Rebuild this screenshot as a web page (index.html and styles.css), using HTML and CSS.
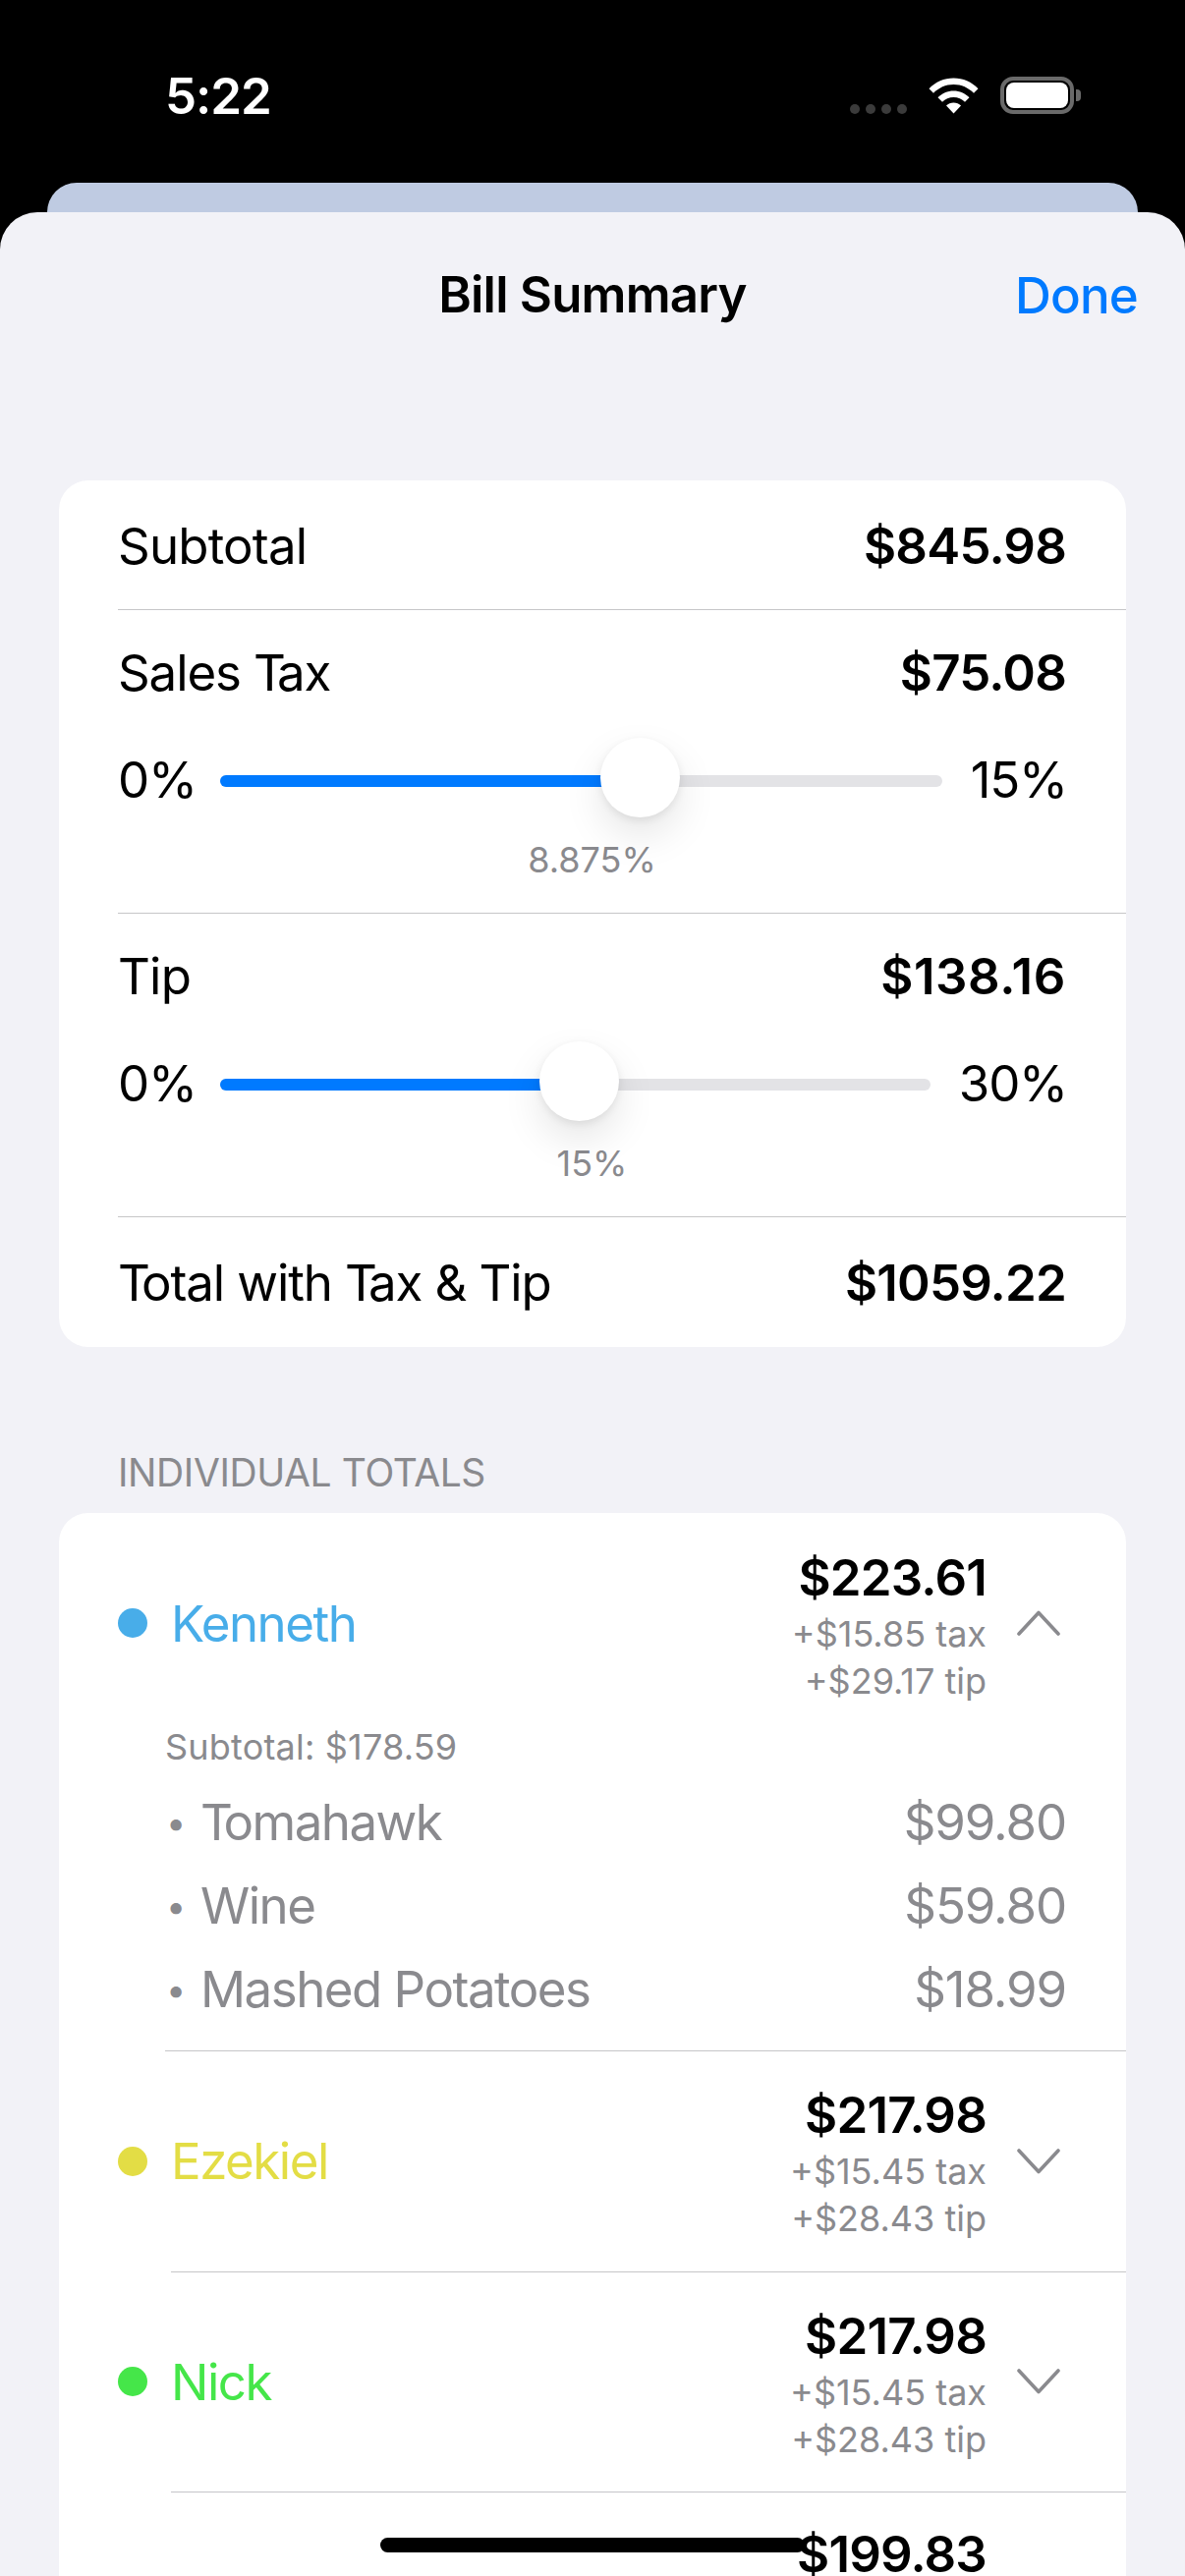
FILE: index.html
```html
<!DOCTYPE html>
<html lang="en">
<head>
<meta charset="utf-8">
<title>Bill Summary</title>
<link rel="stylesheet" href="styles.css">
</head>
<body>
<div class="screen">
  <header class="status">
    <span class="time">5:22</span>
    <div class="status-icons">
      <div class="signal"><i></i><i></i><i></i><i></i></div>
      <svg class="wifi" width="51" height="37" viewBox="0 0 51 37"><path fill="#fff" d="M0.5 11.2C7 4.5 15.8 0.5 25.5 0.5S44 4.5 50.5 11.2L46 15.8C40.7 10.4 33.5 7 25.5 7S10.3 10.4 5 15.8Z"/><path fill="#fff" d="M9.5 20.2C13.7 16 19.3 13.5 25.5 13.5S37.3 16 41.5 20.2L37 24.8C33.9 21.8 30 20 25.5 20S17.1 21.8 14 24.8Z"/><path fill="#fff" d="M18 28.5C20 26.6 22.6 25.5 25.5 25.5S31 26.6 33 28.5L25.5 36.5Z"/></svg>
      <div class="battery"><div class="battery-body"><div class="battery-level"></div></div><div class="battery-nub"></div></div>
    </div>
  </header>
  <div class="behind"></div>
  <main class="sheet">
    <div class="nav">
      <h1 class="nav-title">Bill Summary</h1>
      <span class="nav-done">Done</span>
    </div>
    <section class="card summary">
      <div class="row simple first"><span>Subtotal</span><b>$845.98</b></div>
      <div class="row adjust">
        <div class="line"><span class="tight">Sales <span class="tk">T</span>ax</span><b>$75.08</b></div>
        <div class="slider">
          <span class="slider-min">0%</span>
          <div class="track"><div class="fill" style="width:427px"></div><div class="thumb" style="left:387px"></div></div>
          <span class="slider-max">15%</span>
        </div>
        <div class="caption">8.875%</div>
      </div>
      <div class="row adjust">
        <div class="line"><span>Tip</span><b class="amount-wide">$138.16</b></div>
        <div class="slider">
          <span class="slider-min">0%</span>
          <div class="track"><div class="fill" style="width:364px"></div><div class="thumb" style="left:325px"></div></div>
          <span class="slider-max">30%</span>
        </div>
        <div class="caption">15%</div>
      </div>
      <div class="row simple last"><span class="tight"><span class="tk">T</span>otal with <span class="tk">T</span>ax &amp; Tip</span><b>$1059.22</b></div>
    </section>
    <h2 class="section-label">INDIVIDUAL TOTALS</h2>
    <section class="card people">
      <article class="person">
        <div class="person-head">
          <i class="dot dot-blue"></i>
          <span class="name name-blue">Kenneth</span>
          <div class="amounts"><b>$223.61</b><small>+$15.85 tax</small><small>+$29.17 tip</small></div>
          <svg class="chev" width="44" height="26" viewBox="0 0 44 26"><path d="M2 24L22 2.5L42 24" fill="none" stroke="#8a8a8e" stroke-width="3.6" stroke-linecap="round" stroke-linejoin="round"/></svg>
        </div>
        <div class="details">
          <div class="details-sub">Subtotal: $178.59</div>
          <div class="item"><span class="bullet">•</span><span class="item-name"><span class="tk">T</span>omahawk</span><span class="item-price">$99.80</span></div>
          <div class="item"><span class="bullet">•</span><span class="item-name">Wine</span><span class="item-price">$59.80</span></div>
          <div class="item"><span class="bullet">•</span><span class="item-name">Mashed Potatoes</span><span class="item-price">$18.99</span></div>
        </div>
      </article>
      <article class="person divided divided-wide">
        <div class="person-head">
          <i class="dot dot-yellow"></i>
          <span class="name name-yellow">Ezekiel</span>
          <div class="amounts"><b>$217.98</b><small>+$15.45 tax</small><small>+$28.43 tip</small></div>
          <svg class="chev" width="44" height="26" viewBox="0 0 44 26"><path d="M2 2L22 23.5L42 2" fill="none" stroke="#8a8a8e" stroke-width="3.6" stroke-linecap="round" stroke-linejoin="round"/></svg>
        </div>
      </article>
      <article class="person divided">
        <div class="person-head">
          <i class="dot dot-green"></i>
          <span class="name name-green">Nick</span>
          <div class="amounts"><b>$217.98</b><small>+$15.45 tax</small><small>+$28.43 tip</small></div>
          <svg class="chev" width="44" height="26" viewBox="0 0 44 26"><path d="M2 2L22 23.5L42 2" fill="none" stroke="#8a8a8e" stroke-width="3.6" stroke-linecap="round" stroke-linejoin="round"/></svg>
        </div>
      </article>
      <article class="person divided">
        <div class="person-head person-cut">
          <div class="amounts"><b>$199.83</b></div>
        </div>
      </article>
    </section>
  </main>
  <div class="home"></div>
</div>
</body>
</html>
```
FILE: styles.css
```css
* { box-sizing: border-box; }
html, body { margin: 0; padding: 0; background: #000; }
body { font-family: Inter, "Liberation Sans", sans-serif; color: #000; }
i { display: block; }
b { font-weight: 600; }
.screen { position: relative; width: 1206px; height: 2622px; overflow: hidden; display: flex; flex-direction: column; background: #000; }

.status { height: 186px; flex: none; display: flex; justify-content: space-between; align-items: flex-start; padding: 70px 106px 0 168px; color: #fff; }
.time { font-size: 51px; font-weight: 600; line-height: 56px; letter-spacing: -1px; }
.status-icons { display: flex; align-items: flex-end; margin-top: 8px; height: 38px; }
.signal { display: flex; gap: 6px; margin-right: 22px; }
.signal i { width: 10px; height: 10px; border-radius: 5px; background: #3b3b3b; }
.wifi { margin-right: 22px; display: block; }
.battery { display: flex; align-items: center; height: 38px; }
.battery-body { width: 75px; height: 38px; border: 4px solid #6a6a6a; border-radius: 13px; padding: 2px; }
.battery-level { width: 100%; height: 100%; background: #fff; border-radius: 8px; }
.battery-nub { width: 5px; height: 12px; background: #6a6a6a; border-radius: 0 4px 4px 0; margin-left: 2px; }

.behind { flex: none; height: 30px; margin: 0 48px; background: #bfcbe2; border-radius: 30px 30px 0 0; }

.sheet { flex: 1; background: #f2f2f7; border-radius: 38px 38px 0 0; padding: 0 60px; min-height: 0; overflow: hidden; }
.nav { position: relative; height: 273px; display: flex; justify-content: center; padding-top: 54px; }
.nav-title { margin: 0; font-size: 51px; font-weight: 600; line-height: 60px; letter-spacing: -0.8px; }
.nav-done { position: absolute; right: -12px; top: 54px; font-size: 51px; font-weight: 500; line-height: 62px; color: #007aff; letter-spacing: -0.8px; }

.card { background: #fff; border-radius: 30px; font-size: 51px; letter-spacing: -0.8px; }
.tight { letter-spacing: -1.1px; }
.tk { letter-spacing: -9px; }
.row { margin-left: 60px; padding-right: 61px; border-top: 1px solid #c6c6c8; }
.row.first { border-top: none; padding-top: 2px; }
.simple { display: flex; justify-content: space-between; align-items: center; height: 131px; }
.last { height: 133px; }
.amount-wide { letter-spacing: 0.6px; }
.adjust { height: 309px; padding-top: 34px; }
.line { display: flex; justify-content: space-between; height: 60px; line-height: 60px; }
.slider { display: flex; align-items: center; gap: 29px; height: 60px; margin: 50px -1px 0 0; letter-spacing: -1.2px; }
.slider-min, .slider-max { flex: none; margin-top: -3px; }
.slider-min { width: 75px; }
.track { position: relative; flex: 1; height: 12px; border-radius: 6px; background: #e3e3e6; }
.fill { height: 12px; border-radius: 6px 0 0 6px; background: #007aff; }
.thumb { position: absolute; top: -38px; width: 81px; height: 81px; border-radius: 50%; background: #fff; box-shadow: 0 18px 40px rgba(0,0,0,0.10), 0 3px 8px rgba(0,0,0,0.08); }
.caption { margin-top: 28px; text-align: center; font-size: 36px; line-height: 44px; color: #8a8a8e; letter-spacing: 0; }

.section-label { margin: 0; padding: 105px 0 0 60px; height: 169px; font-size: 39px; font-weight: 400; line-height: 46px; letter-spacing: -0.4px; color: #8a8a8e; }

.person-head { display: flex; align-items: center; height: 224px; padding-left: 60px; padding-right: 67px; }
.divided { margin-left: 114px; border-top: 1px solid #c6c6c8; }
.divided-wide { margin-left: 108px; }
.divided .person-head { margin-left: -114px; height: 223.5px; }
.divided-wide .person-head { margin-left: -108px; }
.divided .person-cut { align-items: flex-start; padding-top: 41px; padding-right: 142px; }
.person-cut .amounts { margin-top: 0; }
.person-cut .amounts b { line-height: 44px; }
.dot { width: 30px; height: 30px; border-radius: 50%; flex: none; }
.dot-blue { background: #48ade9; }
.dot-yellow { background: #e3dd45; }
.dot-green { background: #45e649; }
.name { margin-left: 24px; flex: 1; letter-spacing: -1.5px; }
.name-blue { color: #48ade9; }
.name-yellow { color: #e3dd45; }
.name-green { color: #45e649; }
.amounts { display: flex; flex-direction: column; align-items: flex-end; margin-left: auto; margin-top: 6px; }
.amounts b { line-height: 60px; margin-bottom: 3px; }
.amounts small { font-size: 36px; line-height: 48px; color: #8a8a8e; letter-spacing: 0; }
.chev { margin-left: 31px; flex: none; }

.details { margin-left: 108px; padding-right: 61px; color: #8a8a8e; padding-bottom: 20px; letter-spacing: -1.5px; }
.details .tk { letter-spacing: -9.5px; }
.details-sub { font-size: 36px; line-height: 28px; letter-spacing: 0.2px; margin-bottom: 20px; }
.item { display: flex; height: 85px; align-items: center; }
.bullet { width: 36px; padding-left: 1px; font-size: 36px; }
.item-name { flex: 1; }
.item-price { letter-spacing: -1.1px; }

.home { position: absolute; left: 387px; top: 2583px; width: 432px; height: 15px; border-radius: 8px; background: #000; }
```
